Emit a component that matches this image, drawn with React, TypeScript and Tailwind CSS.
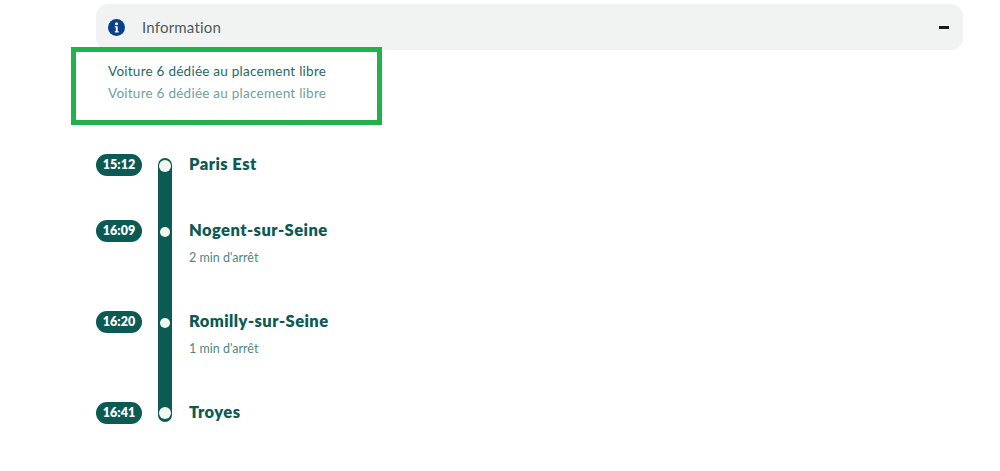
import React from "react";

const stops = [
  { time: "15:12", name: "Paris Est", note: "", rowH: "h-[66px]", rail: "mt-[4px] rounded-t-full", dot: "mt-[2px] w-[12px] h-[12px]" },
  { time: "16:09", name: "Nogent-sur-Seine", note: "2 min d'arrêt", rowH: "h-[91px]", rail: "", dot: "mt-[7px] w-[10px] h-[10px]" },
  { time: "16:20", name: "Romilly-sur-Seine", note: "1 min d'arrêt", rowH: "h-[91px]", rail: "", dot: "mt-[7px] w-[10px] h-[10px]" },
  { time: "16:41", name: "Troyes", note: "", rowH: "h-[22px]", rail: "mb-[2px] rounded-b-full", dot: "mt-[5px] w-[12px] h-[12px]" },
];

export default function App() {
  return (
    <div className="relative w-[1000px] h-[471px] overflow-hidden bg-white pt-[4px] pl-[96px] font-['Lato',sans-serif]">
      <div className="flex items-center justify-between w-[867px] h-[46px] rounded-[12px] bg-[#f1f3f3] pl-[12px] pr-[14px]">
        <div className="flex items-center gap-[17px]">
          <svg width="17" height="17" viewBox="0 0 17 17" aria-hidden="true">
            <circle cx="8.5" cy="8.5" r="8.5" fill="#0a3f8c" />
            <circle cx="8.5" cy="4.8" r="1.5" fill="#fff" />
            <path d="M6.8 7.2h2.9v5h1v1.4H6.8v-1.4h1v-3.6h-1z" fill="#fff" />
          </svg>
          <span className="text-[15px] text-[#4a5a5a] tracking-[0.2px] font-normal">Information</span>
        </div>
        <span className="block w-[10px] h-[3px] bg-[#1c1c1c]" />
      </div>

      <div className="absolute left-[71px] top-[47px] w-[311px] h-[78px] border-[5px] border-[#23b14d] pointer-events-none" />

      <div className="pl-[12px] pt-[13px] flex flex-col gap-[5px] text-[13.5px] leading-[17px] tracking-[0.25px]">
        <p className="text-[#1f6a64]">Voiture 6 dédiée au placement libre</p>
        <p className="text-[#6fa19d]">Voiture 6 dédiée au placement libre</p>
      </div>

      <div className="mt-[52px] flex flex-col">
        {stops.map((s) => (
          <div key={s.time} className={`flex ${s.rowH}`}>
            <div className="w-[46px] h-[22px] rounded-full bg-[#0b5a54] flex items-center justify-center text-white text-[12.5px] font-extrabold">
              {s.time}
            </div>
            <div className={`ml-[16px] w-[14px] bg-[#0b5a54] flex justify-center items-start ${s.rail}`}>
              <span className={`block shrink-0 rounded-full bg-[#f1f8f0] ${s.dot}`} />
            </div>
            <div className="ml-[17px]">
              <div className="text-[16.5px] leading-[22px] font-extrabold text-[#0b5a54] tracking-[0.45px] -mt-[1px]">{s.name}</div>
              {s.note && <div className="mt-[9px] text-[12.5px] leading-[16px] text-[#4f8783]">{s.note}</div>}
            </div>
          </div>
        ))}
      </div>
    </div>
  );
}
